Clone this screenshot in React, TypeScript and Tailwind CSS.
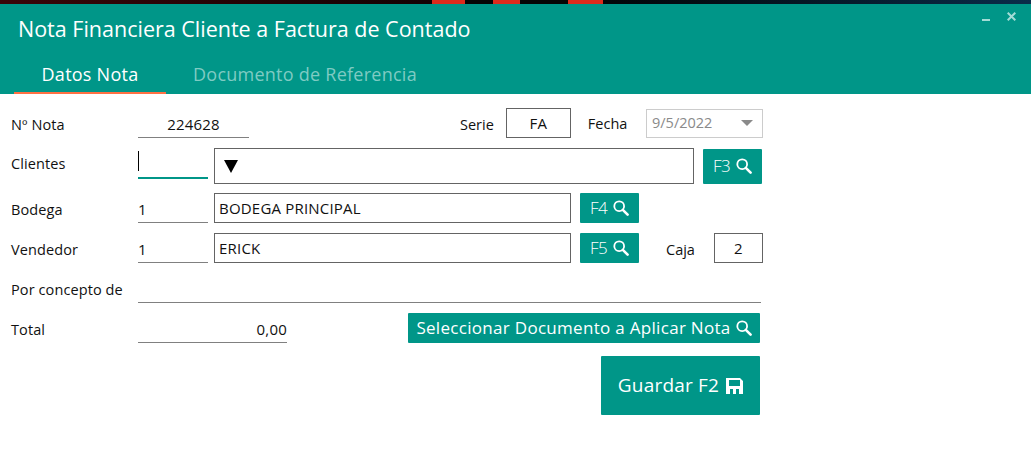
import React from 'react';

const font = "font-['Open_Sans','Noto_Sans',sans-serif]";

const SearchIcon = () => (
  <svg width="16" height="16" viewBox="0 0 16 16" fill="none" stroke="currentColor" className="shrink-0">
    <circle cx="6.2" cy="6.2" r="4.9" strokeWidth="1.8" />
    <path d="M9.8 9.8 L14.6 14.6" strokeWidth="2.6" strokeLinecap="round" />
  </svg>
);

const SaveIcon = () => (
  <svg width="17" height="16" viewBox="0 0 17 16" className="shrink-0">
    <path
      fill="currentColor"
      fillRule="evenodd"
      d="M0 0H14L17 3V16H0Z M3 2V8H14V2Z M4 11V16H7V11Z M10 11V16H13V11Z"
    />
  </svg>
);

// boton verde con tecla y lupa
const KeyButton = ({ label, h = 'h-[30px]' }: { label: string; h?: string }) => (
  <div className={`w-[59px] ${h} bg-[#009688] rounded-[1px] flex items-center justify-center gap-[6px] text-white text-[17px] tracking-[-0.5px] font-light`}>
    <span>{label}</span>
    <SearchIcon />
  </div>
);

const Label = ({ children, cls = 'pt-[4px]' }: { children: React.ReactNode; cls?: string }) => (
  <div className={`w-[138px] pl-[11px] shrink-0 text-[14.5px] tracking-[0.1px] text-[#111] ${cls}`}>{children}</div>
);

const LineInput = ({ value, w, cls = '' }: { value?: string; w: string; cls?: string }) => (
  <div className={`${w} h-[30px] border-b border-[#808080] flex items-end pb-[2px] text-[15px] tracking-[0.2px] text-[#111] ${cls}`}>{value}</div>
);

const BoxInput = ({ value, w, h = 'h-[30px]', cls = '' }: { value: string; w: string; h?: string; cls?: string }) => (
  <div className={`${w} ${h} border border-[#646464] pt-[1px] flex items-center text-[15px] tracking-[0.2px] text-[#111] ${cls}`}>{value}</div>
);

const App: React.FC = () => {
  return (
    <div className={`w-[1031px] h-[465px] bg-white overflow-hidden ${font}`}>
      <div className="h-[4px] flex">
        <div className="w-[432px] bg-linear-to-r from-[#3a0508] to-[#140204]" />
        <div className="w-[33px] bg-[#dc2a1c]" />
        <div className="w-[28px] bg-[#050505]" />
        <div className="w-[27px] bg-[#dc2a1c]" />
        <div className="w-[48px] bg-[#050505]" />
        <div className="w-[35px] bg-[#dc2a1c]" />
        <div className="flex-1 bg-linear-to-r from-[#020608] to-[#0a2c4a]" />
      </div>

      {/* Encabezado */}
      <header className="h-[90px] bg-[#009688] flex flex-col">
        <div className="flex justify-between h-[53px]">
          <h1 className="pl-[18px] pt-[10px] text-[21.5px] leading-[29px] text-white">
            Nota Financiera Cliente a Factura de Contado
          </h1>
          <div className="flex items-start pt-[8px] pr-[15px] gap-[17px]">
            <div className="w-[8px] h-[2px] mt-[7px] bg-[#a3dcd6]" />
            <svg width="9" height="9" viewBox="0 0 9 9" className="text-[#a3dcd6]">
              <path d="M0.7 0.7 L8.3 8.3 M8.3 0.7 L0.7 8.3" stroke="currentColor" strokeWidth="2" />
            </svg>
          </div>
        </div>
        <nav className="flex flex-1 pl-[14px] text-[18px] tracking-[0.25px]">
          <div className="w-[152px] border-b-[2px] border-[#ff7043] text-center text-white leading-[35px]">Datos Nota</div>
          <div className="ml-[27px] text-[#7fcbc3] leading-[35px]">Documento de Referencia</div>
        </nav>
      </header>

      {/* Formulario */}
      <main className="w-[763px] flex flex-col">
        <div className="flex items-center h-[30px] mt-[14px]">
          <Label>Nº Nota</Label>
          <LineInput value="224628" w="w-[111px]" cls="justify-center" />
          <span className="ml-[211px] pt-[4px] text-[14.5px] text-[#111]">Serie</span>
          <BoxInput value="FA" w="w-[65px]" cls="ml-[12px] justify-center" />
          <span className="ml-[17px] pt-[2px] text-[14.5px] text-[#111]">Fecha</span>
          <div className="ml-auto w-[117px] h-[29px] border border-[#cccccc] flex items-center justify-between pl-[5px] pr-[9px] text-[14.5px] text-[#8a8a8a]">
            <span>9/5/2022</span>
            <div className="w-0 h-0 border-x-[6px] border-x-transparent border-t-[6px] border-t-[#8a8a8a]" />
          </div>
        </div>

        <div className="flex items-center h-[36px] mt-[10px]">
          <Label cls="pb-[4px]">Clientes</Label>
          <div className="relative w-[70px] h-[30px] border-b-[2px] border-[#009688] self-end mb-[5px]">
            <div className="absolute left-0 top-[2px] w-[1px] h-[20px] bg-black" />
          </div>
          <div className="w-[480px] h-[36px] ml-[6px] border border-[#646464] flex items-center pl-[9px]">
            <div className="w-0 h-0 border-x-[7px] border-x-transparent border-t-[13px] border-t-black" />
          </div>
          <div className="ml-[9px]">
            <KeyButton label="F3" h="h-[35px]" />
          </div>
        </div>

        <div className="flex items-center h-[30px] mt-[9px]">
          <Label>Bodega</Label>
          <LineInput value="1" w="w-[70px]" />
          <BoxInput value="BODEGA PRINCIPAL" w="w-[357px]" cls="ml-[6px] pl-[4px]" />
          <div className="ml-[9px]"><KeyButton label="F4" /></div>
        </div>

        <div className="flex items-center h-[30px] mt-[10px]">
          <Label>Vendedor</Label>
          <LineInput value="1" w="w-[70px]" />
          <BoxInput value="ERICK" w="w-[357px]" cls="ml-[6px] pl-[4px]" />
          <div className="ml-[9px]"><KeyButton label="F5" /></div>
          <span className="ml-[27px] pt-[4px] text-[14.5px] text-[#111]">Caja</span>
          <BoxInput value="2" w="w-[49px]" cls="ml-auto justify-center" />
        </div>

        <div className="flex items-center h-[30px] mt-[10px]">
          <Label>Por concepto de</Label>
          <LineInput w="w-[623px]" />
        </div>

        <div className="flex items-center h-[30px] mt-[10px]">
          <Label>Total</Label>
          <LineInput value="0,00" w="w-[149px]" cls="justify-end" />
          <div className="ml-[121px] w-[352px] h-[30px] bg-[#009688] rounded-[1px] flex items-center justify-center gap-[5px] text-white text-[17px] tracking-[0.3px]">
            <span>Seleccionar Documento a Aplicar Nota</span>
            <SearchIcon />
          </div>
        </div>

        <div className="flex justify-end mt-[13px] pr-[3px]">
          <div className="w-[159px] h-[59px] bg-[#009688] rounded-[1px] flex items-center justify-center gap-[7px] text-white text-[19px] tracking-[0.2px]">
            <span>Guardar F2</span>
            <SaveIcon />
          </div>
        </div>
      </main>
    </div>
  );
};

export default App;
